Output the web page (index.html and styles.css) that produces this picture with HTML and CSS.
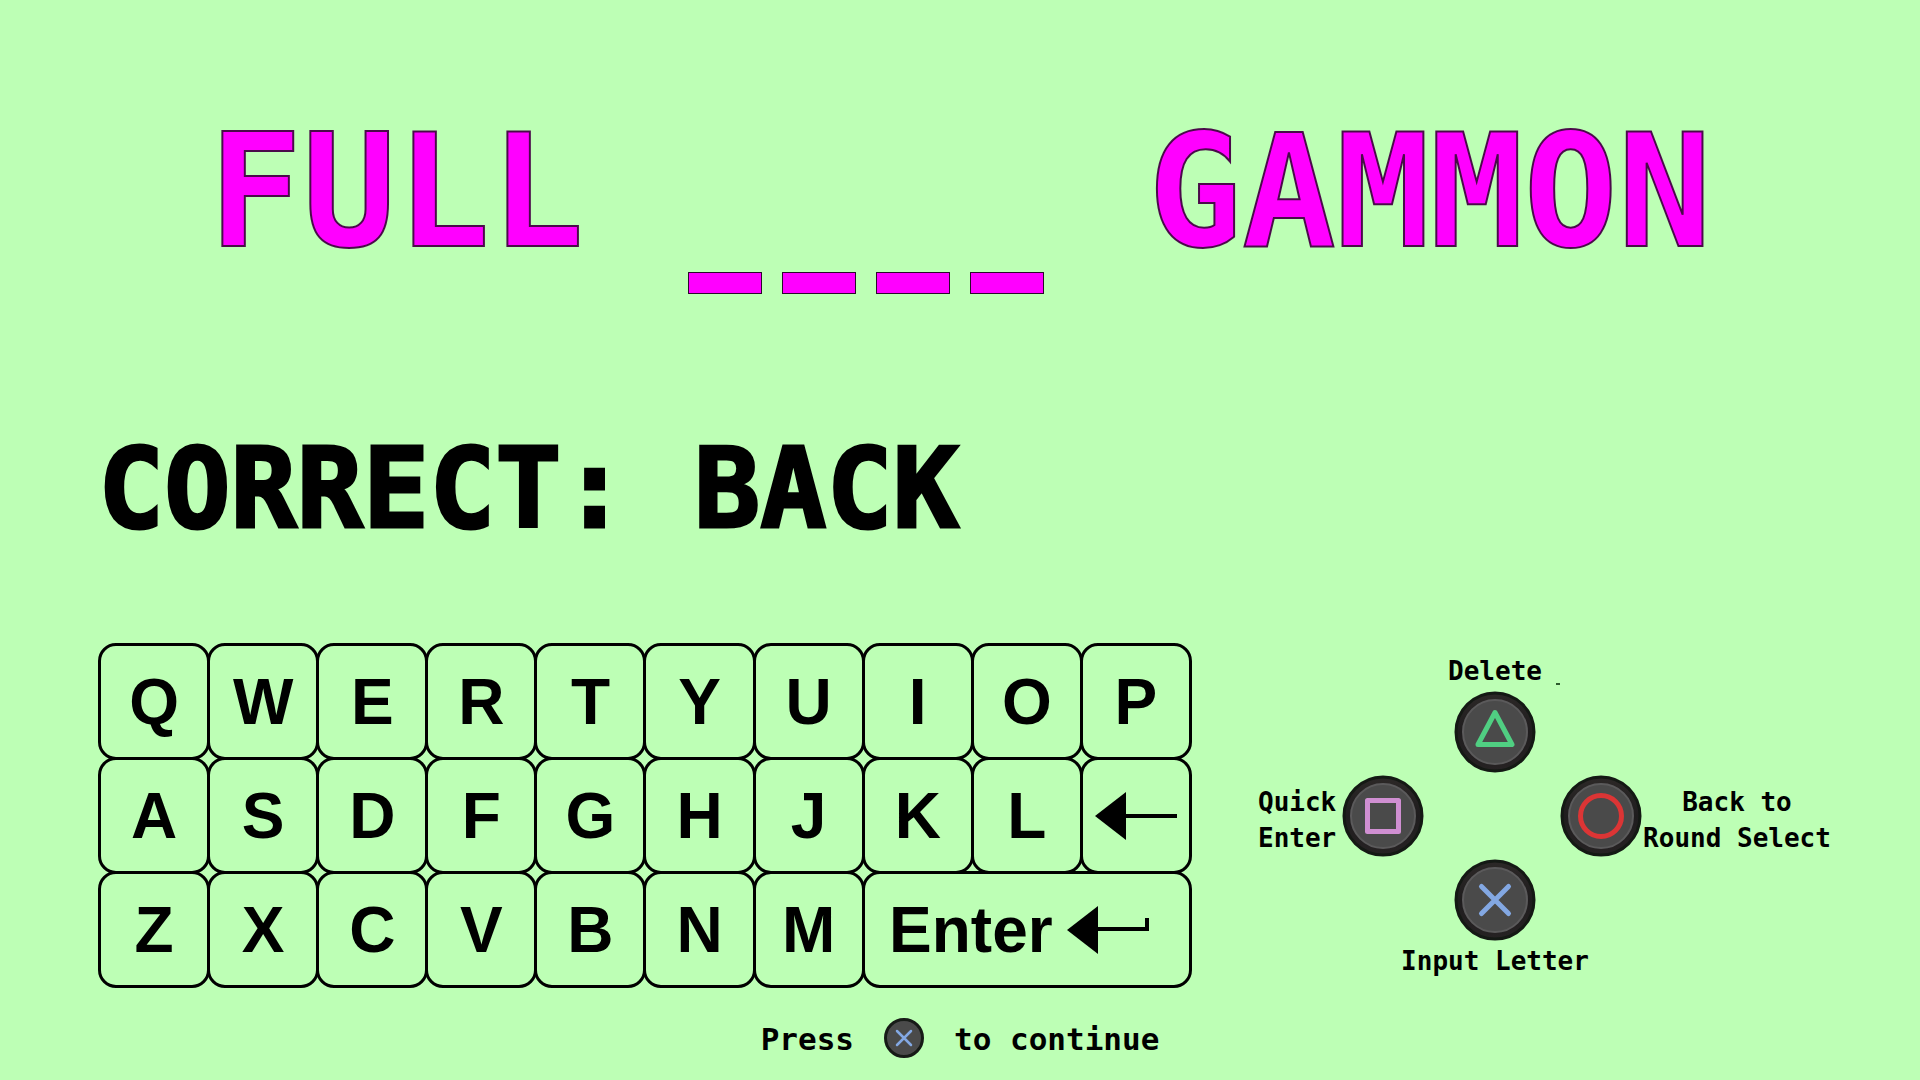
FILE: index.html
```html
<!DOCTYPE html>
<html lang="en">
<head>
  <meta charset="UTF-8" />
  <meta name="viewport" content="width=device-width, initial-scale=1" />
  <title>Missing Word</title>
  <link rel="stylesheet" href="styles.css">
</head>
<body>
  <!-- shared button symbols -->
  <svg class="defs" aria-hidden="true">
    <defs>
      <linearGradient id="rim" x1="0" y1="0" x2="0" y2="1">
        <stop offset="0" stop-color="#2c2827" />
        <stop offset="0.5" stop-color="#1f1d1e" />
        <stop offset="1" stop-color="#262223" />
      </linearGradient>
      <symbol id="disc" viewBox="0 0 82 82">
        <circle cx="41" cy="41" r="39" fill="url(#rim)" stroke="#141914" stroke-width="3" />
        <circle cx="41" cy="41" r="32" fill="#4a4a4a" stroke="#5b5a5b" stroke-width="2" />
      </symbol>
    </defs>
  </svg>

  <main class="game">
    <h1 class="puzzle">
      <span>FULL</span>
      <span class="blanks"><i>_</i><i>_</i><i>_</i><i>_</i></span>
      <span>GAMMON</span>
    </h1>

    <p class="message">CORRECT: BACK</p>

    <div class="controls">
      <div class="keyboard">
        <button>Q</button><button>W</button><button>E</button><button>R</button><button>T</button>
        <button>Y</button><button>U</button><button>I</button><button>O</button><button>P</button>
        <button>A</button><button>S</button><button>D</button><button>F</button><button>G</button>
        <button>H</button><button>J</button><button>K</button><button>L</button>
        <button aria-label="Backspace">
          <svg class="arrow" viewBox="0 0 82 48"><path d="M0 24 31 0V48Z" /><path d="M30 22H82V26H30Z" /></svg>
        </button>
        <button>Z</button><button>X</button><button>C</button><button>V</button><button>B</button>
        <button>N</button><button>M</button>
        <button class="enter">Enter
          <svg class="arrow" viewBox="0 0 82 48"><path d="M0 24 31 0V48Z" /><path d="M30 21H78V12H82V25H30Z" /></svg>
        </button>
      </div>

      <div class="pad">
        <div class="pad-up">
          <span class="hint">Delete</span>
          <svg class="disc" viewBox="0 0 82 82">
            <use href="#disc" />
            <path d="M41 21.5 58 53.5H24Z" fill="none" stroke="#50cf82" stroke-width="5" stroke-linejoin="round" />
          </svg>
        </div>
        <span class="hint pad-left">Quick<br>Enter</span>
        <svg class="disc pad-square" viewBox="0 0 82 82">
          <use href="#disc" />
          <rect x="25.5" y="25.5" width="31" height="31" fill="none" stroke="#d08fd2" stroke-width="5" stroke-linejoin="round" />
        </svg>
        <svg class="disc pad-circle" viewBox="0 0 82 82">
          <use href="#disc" />
          <circle cx="41" cy="41" r="20.5" fill="none" stroke="#dc3535" stroke-width="5" />
        </svg>
        <span class="hint pad-right">Back to<br>Round Select</span>
        <div class="pad-down">
          <svg class="disc" viewBox="0 0 82 82">
            <use href="#disc" />
            <path d="M27.5 27.5 54.5 54.5M54.5 27.5 27.5 54.5" fill="none" stroke="#83a8e3" stroke-width="5" stroke-linecap="round" />
          </svg>
          <span class="hint">Input Letter</span>
        </div>
      </div>
    </div>

    <p class="continue">
      <span>Press</span>
      <svg class="disc-small" viewBox="0 0 40 40">
        <circle cx="20" cy="20" r="18.5" fill="#4a4a4a" stroke="#171b17" stroke-width="3" />
        <path d="M13 13 27 27M27 13 13 27" fill="none" stroke="#83a8e3" stroke-width="2.5" stroke-linecap="round" />
      </svg>
      <span>to continue</span>
    </p>
  </main>
</body>
</html>
```
FILE: styles.css
```css
* {
  box-sizing: border-box;
}
body {
  margin: 0;
  background: #bdffb5;
  color: #000;
  font-family: 'DejaVu Sans Mono', monospace;
  font-weight: 700;
}
.defs {
  position: absolute;
  width: 0;
  height: 0;
}
.game {
  padding: 90px 88px 0 98px;
}

/* word puzzle */
.puzzle {
  display: flex;
  justify-content: center;
  gap: 94px;
  margin: 0 0 130px;
  padding-right: 10px;
  font-size: 156px;
  line-height: 204px;
  color: #ff00ff;
  -webkit-text-stroke: 2px #4a0a4a;
}
.blanks {
  display: flex;
  align-items: flex-end;
  gap: 20px;
  padding: 0 10px;
}
.blanks i {
  width: 74px;
  height: 22px;
  background: #ff00ff;
  border: 1px solid #2a0a2a;
  color: transparent;
  font-size: 16px;
  line-height: 20px;
  text-align: center;
  -webkit-text-stroke: 0;
}
.message {
  margin: 0 0 89px;
  font-size: 110px;
  line-height: 130px;
  -webkit-text-stroke: 3px #000;
}

/* keyboard and gamepad */
.controls {
  display: flex;
  align-items: center;
  gap: 66px;
}
.keyboard {
  flex: 1;
  display: grid;
  grid-template-columns: repeat(10, 1fr);
  grid-auto-rows: 114px;
  padding: 0 3px 3px 0;
}
.keyboard button {
  display: flex;
  justify-content: center;
  align-items: center;
  margin: 0 -3px -3px 0;
  padding: 0;
  background: none;
  border: 3px solid #000;
  border-radius: 18px;
  color: #000;
  font-family: 'Liberation Sans', Arial, sans-serif;
  font-size: 64px;
  font-weight: 700;
}
.keyboard .enter {
  grid-column: span 3;
  gap: 14px;
  padding-right: 16px;
}
.arrow {
  width: 82px;
  height: 48px;
}
.pad {
  display: grid;
  grid-template-columns: 84px 82px 136px 82px 190px;
  align-items: center;
  row-gap: 2px;
}
.pad-up,
.pad-down {
  grid-column: 2 / 5;
  display: flex;
  flex-direction: column;
  align-items: center;
  gap: 2px;
  padding-left: 6px;
}
.pad-up {
  position: relative;
}
/* stray cursor tick beside the label */
.pad-up::after {
  content: "";
  position: absolute;
  top: 30px;
  right: 82px;
  width: 4px;
  height: 2px;
  background: #2c5a2c;
}
.pad-left {
  grid-column: 1;
}
.pad-circle {
  grid-column: 4;
}
.pad-left,
.pad-right {
  padding-top: 8px;
}
.pad-right {
  text-align: center;
}
.hint {
  font-size: 26px;
  line-height: 36px;
  white-space: nowrap;
}
.disc {
  display: block;
  width: 82px;
  height: 82px;
}

/* bottom prompt */
.continue {
  display: flex;
  justify-content: center;
  gap: 30px;
  margin: 30px 0 0;
  padding-right: 10px;
  font-size: 31px;
  line-height: 42px;
}
.disc-small {
  width: 40px;
  height: 40px;
}
```
